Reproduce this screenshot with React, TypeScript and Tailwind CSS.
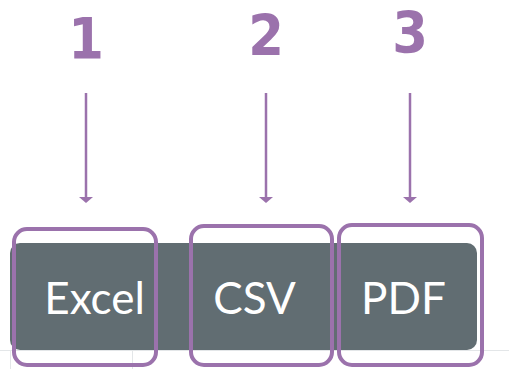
import React from "react";

const steps = [
  { n: "1", col: "w-[172px]", top: "mt-[-1px]", arrow: "mt-[14px]" },
  { n: "2", col: "w-[188px]", top: "mt-[-4px]", arrow: "mt-[17px]" },
  { n: "3", col: "w-[100px]", top: "mt-[-7px]", arrow: "mt-[20px]" },
];

const buttons = [
  { label: "Excel", w: "w-[169px]" },
  { label: "CSV", w: "w-[151px]" },
  { label: "PDF", w: "w-[147px]" },
];

function ArrowDown() {
  return (
    <svg width="16" height="112" viewBox="0 0 16 112" className="block">
      <line x1="8" y1="0" x2="8" y2="108" stroke="#9b72ac" strokeWidth="2.5" />
      <path d="M1 104 L15 104 L8 110 Z" fill="#9b72ac" />
    </svg>
  );
}

export default function App() {
  return (
    <div className="w-[509px] h-[369px] bg-white overflow-hidden flex flex-col">
      {/* numbered callouts */}
      <div className="flex h-[243px]">
        {steps.map((s) => (
          <div key={s.n} className={`${s.col} flex flex-col items-center`}>
            <div
              className={`${s.top} h-[80px] text-[57px] leading-[80px] font-bold text-[#9b72ac]`}
              style={{ fontFamily: '"DejaVu Sans", sans-serif', fontStretch: "condensed" }}
            >
              {s.n}
            </div>
            <div className={s.arrow}>
              <ArrowDown />
            </div>
          </div>
        ))}
      </div>

      {/* export buttons + table edge */}
      <div className="relative flex-1">
        <div className="flex">
          <div className="ml-[10px] flex h-[107px] rounded-[10px] bg-[#616d72]">
            {buttons.map((b) => (
              <div
                key={b.label}
                className={`${b.w} flex items-center justify-center text-white text-[44px]`}
                style={{ fontFamily: "Lato, sans-serif" }}
              >
                {b.label}
              </div>
            ))}
          </div>
        </div>
        <div className="flex h-[19px] border-t border-[#e3e6e8]">
          <div className="ml-[10px] w-[123px] border-l border-r border-[#e3e6e8]" />
        </div>

        {/* annotation outlines */}
        <div className="absolute left-[12px] top-[-16px] w-[146px] h-[140px] rounded-[15px] border-[4px] border-[#9b72ac]" />
        <div className="absolute left-[189px] top-[-19px] w-[145px] h-[143px] rounded-[15px] border-[4px] border-[#9b72ac]" />
        <div className="absolute left-[337px] top-[-20px] w-[147px] h-[144px] rounded-[15px] border-[4px] border-[#9b72ac]" />
      </div>
    </div>
  );
}
